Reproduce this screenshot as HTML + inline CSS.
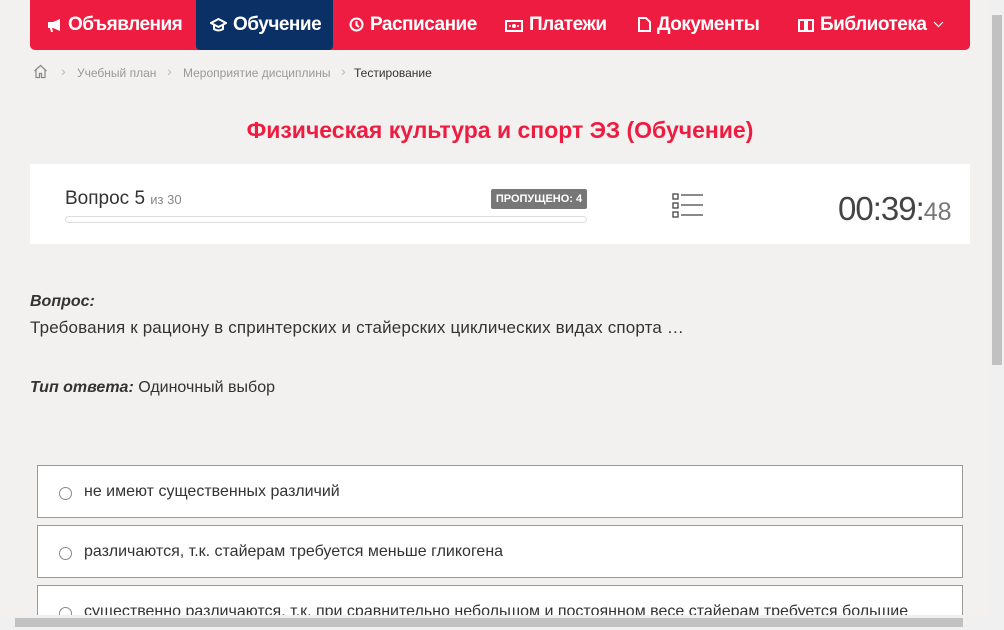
<!DOCTYPE html>
<html><head><meta charset="utf-8"><style>
*{box-sizing:border-box;margin:0;padding:0}
body{width:1004px;height:630px;overflow:hidden;background:#f2f1ef;font-family:"Liberation Sans",sans-serif;position:relative;color:#333}
.nav{position:absolute;left:30px;top:0;width:940px;height:50px;background:#ee1c40;border-radius:0 0 5px 5px}
.nav div{position:absolute;top:0;height:50px;line-height:50px;color:#fff;font-size:19px;letter-spacing:-0.5px;font-family:"Liberation Sans",sans-serif;font-weight:bold;white-space:nowrap}
.nav svg{vertical-align:-2px;margin-right:6px}
.act{background:#0a3066;border-radius:0 0 4px 4px}
.bc{position:absolute;top:66px;font-size:12px;color:#999}
.h1{position:absolute;top:117px;width:1000px;text-align:center;color:#ee1c40;font-size:23px;font-weight:bold;font-family:"Liberation Sans",sans-serif}
.card{position:absolute;left:30px;top:164px;width:940px;height:80px;background:#fff}
.opt{position:absolute;left:37px;width:926px;height:53px;border:1px solid #999;background:#fff;font-size:16px}
.opt span{position:absolute;left:46px;top:17px}
.opt i{position:absolute;left:21px;top:21px;width:13px;height:13px;border:1px solid #888;border-radius:50%}
</style></head><body>
<div class="nav">
<div style="left:17px"><svg width="15" height="14"><path d="M1 4h5l7-3v12l-7-3H1zM3 10l1 4h2l-1-4" fill="#fff"/></svg>Объявления</div>
<div class="act" style="left:166px;width:137px;padding-left:14px"><svg width="17" height="14"><path d="M8.5 1L16 5l-7.5 4L1 5z M4 7v4c3 2 6 2 9 0V7" fill="none" stroke="#fff" stroke-width="2"/></svg>Обучение</div>
<div style="left:319px"><svg width="15" height="15"><circle cx="7.5" cy="7.5" r="6" fill="none" stroke="#fff" stroke-width="2"/><path d="M7.5 4v4l2.5 2" stroke="#fff" stroke-width="2" fill="none"/></svg>Расписание</div>
<div style="left:475px"><svg width="18" height="12"><rect x="1" y="1" width="16" height="10" fill="none" stroke="#fff" stroke-width="2"/><circle cx="9" cy="6" r="2" fill="#fff"/><circle cx="5" cy="6" r="1" fill="#fff"/><circle cx="13" cy="6" r="1" fill="#fff"/></svg>Платежи</div>
<div style="left:608px"><svg width="13" height="15"><path d="M1 1h7l4 4v9H1z" fill="none" stroke="#fff" stroke-width="2"/></svg>Документы</div>
<div style="left:768px"><svg width="16" height="14"><path d="M1 2h6v11H1zM9 2h6v11H9zM4 13h8" fill="none" stroke="#fff" stroke-width="2"/></svg>Библиотека <svg width="11" height="7" style="margin-left:2px;vertical-align:2px"><path d="M1 1l4.5 4.5L10 1" fill="none" stroke="#fff" stroke-width="1.2"/></svg></div>
</div>
<svg style="position:absolute;left:33px;top:64px" width="15" height="15"><path d="M1.5 7L7.5 1.5 13.5 7M3 6v7.5h3.5v-4h2v4H12V6" fill="none" stroke="#888" stroke-width="1.2"/></svg>
<div class="bc" style="left:61px;font-size:14px;top:63px;color:#bbb">›</div><div class="bc" style="left:77px">Учебный план</div>
<div class="bc" style="left:167px;font-size:14px;top:63px;color:#bbb">›</div><div class="bc" style="left:183px">Мероприятие дисциплины</div>
<div class="bc" style="left:341px;font-size:14px;top:63px;color:#bbb">›</div><div class="bc" style="left:354px;color:#333">Тестирование</div>
<div class="h1">Физическая культура и спорт ЭЗ (Обучение)</div>
<div class="card">
<div style="position:absolute;left:35px;top:24px;font-size:19px">Вопрос 5 <span style="font-size:13px;color:#888">из 30</span></div>
<div style="position:absolute;left:461px;top:25px;width:96px;height:20px;background:#777;border-radius:2px;color:#fff;font-size:11px;font-weight:bold;text-align:center;line-height:20px">ПРОПУЩЕНО: 4</div>
<div style="position:absolute;left:35px;top:52px;width:522px;height:7px;border:1px solid #ddd;border-radius:4px"></div>
<svg style="position:absolute;left:642px;top:28px" width="32" height="28"><g fill="none" stroke="#444" stroke-width="1.3"><rect x="1" y="2" width="5" height="5"/><rect x="1" y="11" width="5" height="5"/><rect x="1" y="20" width="5" height="5"/><path d="M9 3h22M9 13h22M9 23h22"/></g></svg>
<div style="position:absolute;left:808px;top:26px;font-size:33px;color:#444;letter-spacing:-1px">00:39:<span style="font-size:25px;color:#777;letter-spacing:0">48</span></div>
</div>
<div style="position:absolute;left:30px;top:293px;font-size:16px;font-weight:bold;font-style:italic">Вопрос:</div>
<div style="position:absolute;left:30px;top:318px;font-size:17px;letter-spacing:0.16px">Требования к рациону в спринтерских и стайерских циклических видах спорта …</div>
<div style="position:absolute;left:30px;top:379px;font-size:16px"><b><i>Тип ответа:</i></b> Одиночный выбор</div>
<div class="opt" style="top:465px"><i></i><span>не имеют существенных различий</span></div>
<div class="opt" style="top:525px"><i></i><span>различаются, т.к. стайерам требуется меньше гликогена</span></div>
<div class="opt" style="top:585px;height:40px;overflow:hidden"><i></i><span>существенно различаются, т.к. при сравнительно небольшом и постоянном весе стайерам требуется большие</span></div>
<div style="position:absolute;left:0;top:615px;width:990px;height:15px;background:#f0f0f0"></div>
<div style="position:absolute;left:15px;top:618px;width:948px;height:9px;background:#c1c1c1"></div>
<div style="position:absolute;left:990px;top:0;width:14px;height:630px;background:#f0f0f0"></div>
<div style="position:absolute;left:992px;top:15px;width:10px;height:350px;background:#c1c1c1"></div>
</body></html>
